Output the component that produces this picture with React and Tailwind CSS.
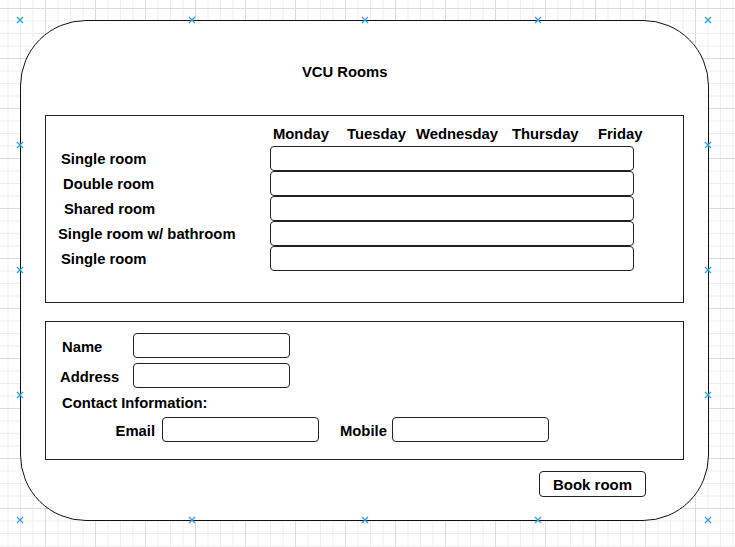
import React from "react";

const font = { fontFamily: '"Liberation Sans", Arial, sans-serif' };

// blue "x" handles that draw.io puts around the selected shape
const markers = [
  [20, 20], [192, 20], [365, 20], [538, 20], [708, 20],
  [20, 145], [708, 145],
  [20, 270], [708, 270],
  [20, 395], [708, 395],
  [20, 520], [192, 520], [365, 520], [538, 520], [708, 520],
];

const days = [
  { label: "Monday", w: "w-[74px]" },
  { label: "Tuesday", w: "w-[69px]" },
  { label: "Wednesday", w: "w-[96px]" },
  { label: "Thursday", w: "w-[86px]" },
  { label: "Friday", w: "w-[60px]" },
];

const rooms = [
  { label: "Single room", pl: "pl-[15px]" },
  { label: "Double room", pl: "pl-[17px]" },
  { label: "Shared room", pl: "pl-[18px]" },
  { label: "Single room w/ bathroom", pl: "pl-[12px]" },
  { label: "Single room", pl: "pl-[15px]" },
];

const Field = ({ className = "" }) => (
  <div className={"h-[25px] border border-[#222] rounded-[4px] bg-white " + className} />
);

const Marker = ({ x, y }) => (
  <svg
    width="8"
    height="8"
    viewBox="0 0 8 8"
    className="absolute"
    style={{ left: x - 4, top: y - 4 }}
  >
    <path d="M1 1L7 7M7 1L1 7" stroke="#2fa4e7" strokeWidth="1.4" />
  </svg>
);

export default function App() {
  return (
    <div
      className="relative w-[735px] h-[547px] overflow-hidden bg-white text-black font-bold text-[14.8px] [background-image:linear-gradient(to_right,#dcdcdc_1px,transparent_1px),linear-gradient(to_bottom,#dcdcdc_1px,transparent_1px),linear-gradient(to_right,#eeeeee_1px,transparent_1px),linear-gradient(to_bottom,#eeeeee_1px,transparent_1px)] [background-size:50px_50px,50px_50px,12.5px_12.5px,12.5px_12.5px] [background-position:45px_0,0_8px,7.5px_0,0_8px]"
      style={font}
    >
      <div className="pt-[20px] pl-[20px]">
        {/* device frame */}
        <div className="w-[689px] h-[501px] bg-white border border-[#111] rounded-[66px] flex flex-col">
          <div className="mt-[41px] ml-[281px] h-[20px] leading-[20px]">VCU Rooms</div>

          {/* availability table */}
          <div className="mt-[33px] ml-[24px] w-[639px] h-[188px] border border-[#222] flex flex-col">
            <div className="mt-[8px] ml-[227px] flex h-[20px] leading-[20px]">
              {days.map((d) => (
                <div key={d.label} className={d.w}>
                  {d.label}
                </div>
              ))}
            </div>
            <div className="mt-[2px] flex flex-col">
              {rooms.map((r, i) => (
                <div key={i} className="flex items-center h-[25px]">
                  <div className={"w-[224px] pt-[1px] " + r.pl}>{r.label}</div>
                  <Field className="w-[364px]" />
                </div>
              ))}
            </div>
          </div>

          {/* contact form */}
          <div className="mt-[18px] ml-[24px] w-[639px] h-[139px] border border-[#222] flex flex-col">
            <div className="mt-[11px] flex items-center">
              <div className="w-[87px] pl-[16px] pt-[3px]">Name</div>
              <Field className="w-[157px]" />
            </div>
            <div className="mt-[5px] flex items-center">
              <div className="w-[87px] pl-[14px] pt-[3px]">Address</div>
              <Field className="w-[157px]" />
            </div>
            <div className="mt-[5px] pl-[16px] h-[20px] leading-[20px]">Contact Information:</div>
            <div className="mt-[4px] flex items-center">
              <div className="w-[116px] pr-[7px] pt-[3px] text-right">Email</div>
              <Field className="w-[157px]" />
              <div className="w-[73px] pl-[21px] pt-[3px]">Mobile</div>
              <Field className="w-[157px]" />
            </div>
          </div>

          <button className="mt-[11px] ml-[518px] w-[107px] h-[26px] border border-[#222] rounded-[4px] bg-white font-bold text-[15px] leading-none">
            Book room
          </button>
        </div>
      </div>

      {markers.map(([x, y], i) => (
        <Marker key={i} x={x} y={y} />
      ))}
    </div>
  );
}
